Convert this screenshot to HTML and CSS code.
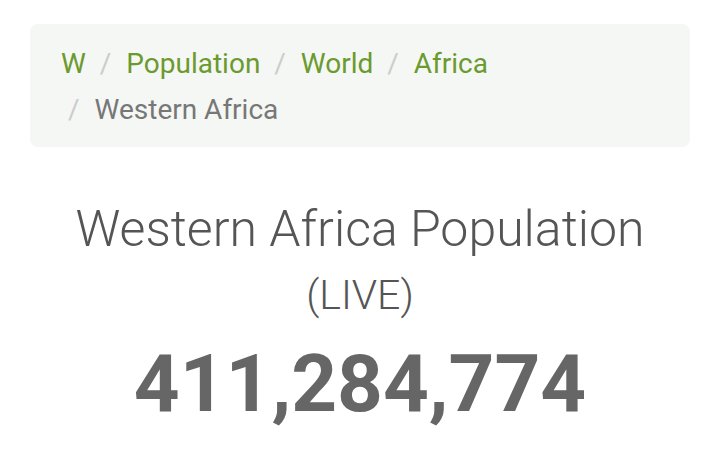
FILE: index.html
```html
<!DOCTYPE html>
<html lang="en">
<head>
    <meta charset="UTF-8">
    <meta name="viewport" content="width=device-width, initial-scale=1.0">
    <title>Western Africa Population (LIVE)</title>
    <link rel="stylesheet" href="styles.css">
</head>
<body>
  <ol class="breadcrumb">
    <li><a href="#">W</a></li>
    <li><a href="#">Population</a></li>
    <li><a href="#">World</a></li>
    <li><a href="#">Africa</a></li>
    <li class="active">Western Africa</li>
  </ol>

  <h1 class="title">Western Africa Population
    <span class="live">(LIVE)</span>
  </h1>

  <div class="counter">411,284,774</div>
</body>
</html>
```

FILE: styles.css
```css
body{
    margin: 0;
    padding: 24px 30px 0;
    background: #fff;
    font-family: Roboto, "Liberation Sans", sans-serif;
}

.breadcrumb{
    list-style: none;
    margin: 0;
    padding: 17px 31px 14px;
    background-color: #f5f7f4;
    border-radius: 8px;
    font-size: 28px;
    line-height: 46px;
}
.breadcrumb li{
    display: inline-block;
}
.breadcrumb li + li:before{
    content: "/\00a0";
    padding: 0 8px 0 7px;
    color: #ccc;
}
.breadcrumb a{
    color: #6b9a2f;
    text-decoration: none;
}
.breadcrumb .active{
    color: #777;
}

.title{
    margin: 49px 0 0;
    text-align: center;
    font-weight: 300;
    font-size: 50px;
    line-height: 66px;
    color: #555;
}
.live{
    display: block;
    font-size: 41px;
}

.counter{
    margin-top: 6px;
    text-align: center;
    font-weight: 700;
    font-size: 80px;
    line-height: 100px;
    color: #666;
}
```
